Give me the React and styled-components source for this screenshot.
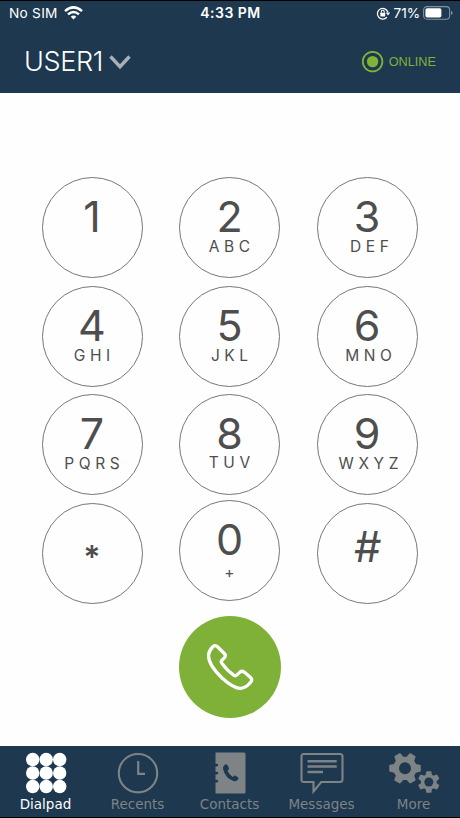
import React from "react";
import styled, { createGlobalStyle } from "styled-components";

const GlobalStyle = createGlobalStyle`
  * { box-sizing: border-box; }
  body { margin: 0; background: #000; }
`;

const Screen = styled.div`
  width: 460px;
  height: 818px;
  display: flex;
  flex-direction: column;
  overflow: hidden;
  background: #fefefe;
  border-top: 1px solid #000;
  border-bottom: 1px solid #000;
  font-family: Inter, "Liberation Sans", sans-serif;
`;

const Header = styled.header`
  height: 92px;
  flex: none;
  background: #1d384f;
  color: #fff;
`;

const StatusBar = styled.div`
  height: 24px;
  display: grid;
  grid-template-columns: 1fr auto 1fr;
  align-items: center;
  padding: 0 7px 0 9px;
  font-size: 13.7px;
`;

const StatusGroup = styled.div`
  display: flex;
  align-items: center;
  justify-content: ${(p) => (p.$end ? "flex-end" : "flex-start")};
  gap: ${(p) => (p.$end ? "3px" : "6px")};
  letter-spacing: ${(p) => (p.$end ? "-0.1px" : "0.25px")};
`;

const Time = styled.div`
  font-weight: 600;
  font-size: 14px;
  line-height: 16px;
  letter-spacing: 0.5px;
  margin: 0 1px 1px 0;
`;

const AccountBar = styled.div`
  height: 68px;
  display: flex;
  align-items: center;
  justify-content: space-between;
  padding: 5px 24px 0 24px;
`;

const UserButton = styled.button`
  display: flex;
  align-items: center;
  gap: 6px;
  padding: 0;
  border: 0;
  background: none;
  color: #fff;
  font: 350 27px/32px Inter, sans-serif;
  letter-spacing: -0.35px;
`;

const Presence = styled.div`
  display: flex;
  align-items: center;
  gap: 5px;
  color: #80b237;
  font: 12.7px/16px "Liberation Sans", sans-serif;
`;

const Main = styled.main`
  flex: 1;
  display: flex;
  flex-direction: column;
  align-items: center;
  padding-top: 84px;
`;

const Keypad = styled.div`
  display: grid;
  grid-template-columns: repeat(3, 101px);
  grid-auto-rows: 101px;
  column-gap: 36.5px;
  row-gap: 7.5px;
  margin-right: 1px;
`;

const Key = styled.button`
  width: 101px;
  height: 101px;
  display: flex;
  flex-direction: column;
  align-items: center;
  padding: ${(p) => p.$top || 17.4}px 0 0;
  margin-top: ${(p) => p.$lift || 0}px;
  border: 1px solid #777;
  border-radius: 50%;
  background: none;
  color: #4e4e4e;
  font-family: Inter, sans-serif;
`;

const Digit = styled.span`
  font-size: ${(p) => p.$size || 43}px;
  font-weight: ${(p) => p.$weight || 400};
  font-style: ${(p) => (p.$slanted ? "italic" : "normal")};
  line-height: 42px;
`;

const Letters = styled.span`
  font-size: 15.5px;
  line-height: 16px;
  margin-top: ${(p) => 2 + (p.$gap || 0)}px;
  padding-left: ${(p) => p.$shift || 0}px;
  letter-spacing: 4.6px;
  margin-right: -4.6px;
`;

const CallButton = styled.button`
  width: 102px;
  height: 102px;
  display: grid;
  place-items: center;
  margin-top: 12.5px;
  padding: 0;
  border: 0;
  border-radius: 50%;
  background: #7fb138;
`;

const TabBar = styled.nav`
  height: 71px;
  flex: none;
  display: grid;
  grid-template-columns: repeat(5, 92px);
  background: #1d384f;
`;

const Tab = styled.button`
  display: flex;
  flex-direction: column;
  align-items: center;
  padding: 6px 1px 0 0;
  border: 0;
  background: none;
  color: ${(p) => (p.$active ? "#fff" : "#7e8386")};
  font: 13.5px/16px "DejaVu Sans", sans-serif;

  svg { display: block; margin: 0 0 2px 1px; }
`;

const keys = [
  { digit: "1" },
  { digit: "2", letters: "ABC" },
  { digit: "3", letters: "DEF", shift: 5 },
  { digit: "4", letters: "GHI" },
  { digit: "5", letters: "JKL" },
  { digit: "6", letters: "MNO", shift: 3 },
  { digit: "7", letters: "PQRS" },
  { digit: "8", letters: "TUV", gap: -1 },
  { digit: "9", letters: "WXYZ", shift: 3 },
  { digit: "*", size: 32, top: 33, weight: 600 },
  { digit: "0", letters: "+", lift: -3, top: 17, gap: 3 },
  { digit: "#", top: 21, weight: 400 },
];

const WifiIcon = () => (
  <svg width="19" height="14" viewBox="0 0 19 14" fill="none" stroke="#fff" strokeWidth="2.5">
    <path d="M1 5.1Q9.5-2.4 18 5.1" />
    <path d="M4 8.4Q9.5 3.6 15 8.4" />
    <path d="M6.7 10.7Q9.5 8.4 12.3 10.7L9.5 13.5Z" fill="#fff" stroke="none" />
  </svg>
);

const LockIcon = () => (
  <svg width="15" height="13" viewBox="0 0 14 12" fill="none" stroke="#fff" strokeWidth="1.2">
    <path d="M10.2 9.4A5 5 0 1 1 11.1 4.8" />
    <path d="M9.2 5.1h4L11.2 7.8Z" fill="#fff" stroke="none" />
    <rect x="4" y="5.3" width="4.6" height="3.4" rx=".5" fill="#fff" stroke="none" />
    <path d="M4.9 5.4V4.3a1.4 1.4 0 0 1 2.8 0v1.1" strokeWidth="1" />
  </svg>
);

const BatteryIcon = () => (
  <svg width="30" height="14" viewBox="0 0 30 14">
    <rect x=".6" y=".6" width="26" height="12.6" rx="3.4" fill="none" stroke="#8493a0" strokeWidth="1.1" />
    <rect x="2.4" y="2.3" width="16" height="9.2" rx="1.8" fill="#fff" />
    <path d="M28 4.7q1.6.7 1.6 2.2T28 9.1Z" fill="#8493a0" />
  </svg>
);

const ChevronIcon = () => (
  <svg width="22" height="16" viewBox="0 0 22 16" fill="none" stroke="#a9b0b7" strokeWidth="3.4">
    <path d="M1.5 2.5L11 12.7L20.5 2.5" />
  </svg>
);

const OnlineIcon = () => (
  <svg width="22" height="22" viewBox="0 0 22 22">
    <circle cx="10.6" cy="10.6" r="9.8" fill="none" stroke="#80b237" strokeWidth="1.8" />
    <circle cx="10.6" cy="10.6" r="5.7" fill="#80b237" />
  </svg>
);

const CallIcon = () => (
  <svg width="48" height="48" viewBox="0 0 48 48" fill="none" stroke="#fff" strokeWidth="3.3" strokeLinejoin="round">
    <path d="M7 3.5Q9.2 1.6 11.5 3.8L18.3 10.5Q20.3 12.6 18.3 14.8L15.8 17.3Q14.6 18.5 15.8 20.1Q21.3 27.8 28 32.3Q29.5 33.3 31 31.9L34 29.1Q36 27.5 38.2 29.1L44.6 34.5Q46.8 36.6 44.6 39.2Q40 44.9 34.8 45.3Q28.5 46 16.3 35.2Q1.8 21.5 2.6 11.8Q3.1 7.3 7 3.5Z" />
  </svg>
);

const DialpadIcon = () => (
  <svg width="42" height="42" viewBox="0 0 42 42" fill="#fff">
    {[7.5, 21, 34.5].map((y) =>
      [7.7, 21.2, 34.7].map((x) => <circle key={`${x}-${y}`} cx={x} cy={y} r="6.7" />)
    )}
  </svg>
);

const RecentsIcon = () => (
  <svg width="42" height="42" viewBox="0 0 42 42" fill="none" stroke="#7e8386" strokeWidth="2.1">
    <circle cx="21" cy="21.2" r="19.2" />
    <path d="M21.2 9V21.8H28" strokeWidth="2.2" />
  </svg>
);

const ContactsIcon = () => (
  <svg width="42" height="42" viewBox="0 0 42 42">
    <path d="M6.5.5H35Q36.5.5 36.5 2V40Q36.5 41.5 35 41.5H6.5V30.4Q9 31 9 28.9Q8.5 27.5 6.5 28V22.3Q9 23 9 20.8Q8.5 19.4 6.5 20V14.3Q9 15 9 12.8Q8.5 11.4 6.5 12Z" fill="#7e8386" />
    <path d="M6 13h2.2M6 21h2.2M6 29h2.2" stroke="#1d384f" strokeWidth="2" strokeLinecap="round" />
    <path d="M16 12.5Q17.2 11.6 18.4 13L20 16.1Q20.5 17.4 18.5 18.8Q20 22.6 23.7 25Q25 23 26.3 23.5L29.1 25.4Q30.1 26.3 29 27.5Q27.3 29.9 24.5 29Q16.2 26 14.2 17.4Q13.7 14.2 16 12.5Z" fill="#1d384f" />
  </svg>
);

const MessagesIcon = () => (
  <svg width="44" height="42" viewBox="0 0 44 42" fill="none" stroke="#7e8386" strokeWidth="2.1">
    <path d="M4 2H40Q42.5 2 42.5 4.5V27.5Q42.5 30 40 30H21.2L13.5 39.5V30H4Q1.5 30 1.5 27.5V4.5Q1.5 2 4 2Z" />
    <path d="M7.5 9.2H36.7M7.5 14.5H36.7M7.5 20H23" strokeWidth="2.4" />
  </svg>
);

const gearPath = (cx, cy, outer, root, offset) => {
  const points = [];
  for (let i = 0; i < 6; i += 1) {
    [[-0.32, root], [-0.17, outer], [0.17, outer], [0.32, root]].forEach(([turn, radius]) => {
      const angle = offset + (i * Math.PI) / 3 + turn;
      points.push(`${(cx + radius * Math.cos(angle)).toFixed(2)} ${(cy + radius * Math.sin(angle)).toFixed(2)}`);
    });
  }
  return `M${points.join("L")}Z`;
};

const MoreIcon = () => (
  <svg width="52" height="42" viewBox="0 0 52 42" fill="#7e8386" stroke="#7e8386" strokeWidth="2" strokeLinejoin="round">
    <path d={gearPath(17, 16.3, 15, 10.9, 0)} />
    <circle cx="17" cy="16.3" r="6" fill="#1d384f" stroke="none" />
    <path d={gearPath(40.8, 30, 10, 7, Math.PI / 6)} />
    <circle cx="40.8" cy="30" r="4.5" fill="#1d384f" stroke="none" />
  </svg>
);

const tabs = [
  { label: "Dialpad", Icon: DialpadIcon, active: true },
  { label: "Recents", Icon: RecentsIcon },
  { label: "Contacts", Icon: ContactsIcon },
  { label: "Messages", Icon: MessagesIcon },
  { label: "More", Icon: MoreIcon },
];

export default function App() {
  return (
    <Screen>
      <GlobalStyle />
      <Header>
        <StatusBar>
          <StatusGroup>No SIM <WifiIcon /></StatusGroup>
          <Time>4:33 PM</Time>
          <StatusGroup $end><LockIcon /><span>71%</span><BatteryIcon /></StatusGroup>
        </StatusBar>
        <AccountBar>
          <UserButton>USER1 <ChevronIcon /></UserButton>
          <Presence><OnlineIcon />ONLINE</Presence>
        </AccountBar>
      </Header>
      <Main>
        <Keypad>
          {keys.map((k) => (
            <Key key={k.digit} $top={k.top} $lift={k.lift}>
              <Digit $size={k.size} $weight={k.weight} $slanted={k.digit === "#"}>{k.digit}</Digit>
              {k.letters && <Letters $gap={k.gap} $shift={k.shift}>{k.letters}</Letters>}
            </Key>
          ))}
        </Keypad>
        <CallButton aria-label="Call"><CallIcon /></CallButton>
      </Main>
      <TabBar>
        {tabs.map(({ label, Icon, active }) => (
          <Tab key={label} $active={active}><Icon />{label}</Tab>
        ))}
      </TabBar>
    </Screen>
  );
}
